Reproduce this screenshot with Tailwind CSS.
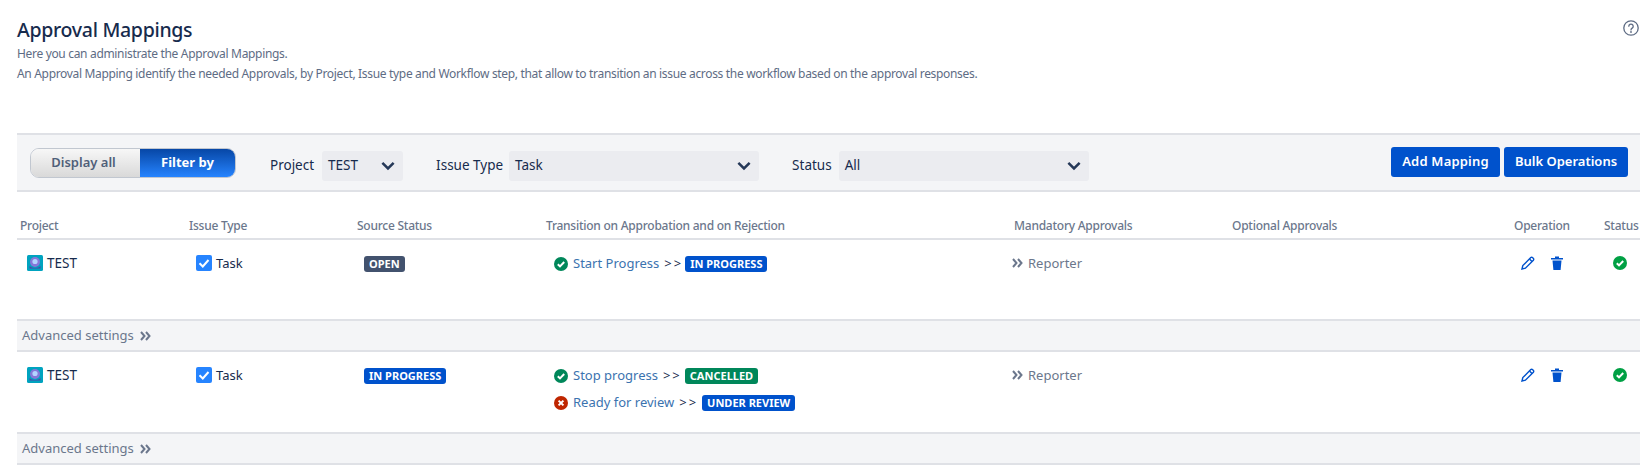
<!DOCTYPE html>
<html lang="en">
<head>
    <meta charset="UTF-8">
    <title>Approval Mappings</title>
    <script src="https://cdn.jsdelivr.net/npm/@tailwindcss/browser@4"></script>
</head>
<body class="bg-white font-['Noto_Sans',sans-serif] text-[#172b4d] text-[13px] overflow-hidden">
    <div class="pl-[17px] pr-[7px]">
        <!-- Page header -->
        <header class="relative h-[133px] pt-[17px]">
            <h1 class="text-[19.5px] leading-[26px] font-medium tracking-[-0.3px]">Approval Mappings</h1>
            <p class="mt-[1px] text-[12px] leading-[20px] tracking-[-0.325px] text-[#5e6c84]">Here you can administrate the Approval Mappings.</p>
            <p class="text-[12px] leading-[20px] tracking-[-0.325px] text-[#5e6c84]">An Approval Mapping identify the needed Approvals, by Project, Issue type and Workflow step, that allow to transition an issue across the workflow based on the approval responses.</p>
            <svg class="absolute right-[1px] top-[20px] w-4 h-4" viewBox="0 0 16 16" fill="none" stroke="#5e6c84" stroke-width="1.3"><circle cx="8" cy="8" r="7.2"/><path d="M5.8 6.2a2.2 2.2 0 1 1 3.4 1.9c-.8.5-1.2.9-1.2 1.8" stroke-linecap="round"/><circle cx="8" cy="12" r=".9" fill="#5e6c84" stroke="none"/></svg>
        </header>

        <!-- Toolbar -->
        <div class="h-[59px] flex items-center bg-[#f4f5f7] border-y-2 border-[#dfe1e6] pl-[13px] pr-[12px]">
            <div class="flex w-[206px] h-[30px] rounded-[9px] border border-[#c1c7d0] overflow-hidden text-[13px] font-semibold">
                <span class="w-[109px] pr-[4px] flex items-center justify-center bg-gradient-to-b from-[#f7f7f7] to-[#d9d9d9] text-[#505f79]">Display all</span>
                <span class="flex-1 flex items-center justify-center bg-gradient-to-b from-[#0747a6] to-[#2684ff] text-white font-bold">Filter by</span>
            </div>
            <label class="ml-[34px] mr-2 mt-[6px] text-[13.5px]">Project</label>
            <div class="w-[81px] h-[30px] mt-[6px] flex items-center justify-between bg-[#ebecf0] rounded-[3px] pl-[6px] pr-[5px] text-[13.5px]">TEST<svg class="w-5 h-5" viewBox="0 0 16 16" fill="none" stroke="#253858" stroke-width="2"><path d="M3.5 5.5 8 10l4.5-4.5"/></svg></div>
            <label class="ml-[33px] mr-[6px] mt-[6px] text-[13.5px]">Issue Type</label>
            <div class="w-[250px] h-[30px] mt-[6px] flex items-center justify-between bg-[#ebecf0] rounded-[3px] pl-[6px] pr-[5px] text-[13.5px]">Task<svg class="w-5 h-5" viewBox="0 0 16 16" fill="none" stroke="#253858" stroke-width="2"><path d="M3.5 5.5 8 10l4.5-4.5"/></svg></div>
            <label class="ml-[33px] mr-[7px] mt-[6px] text-[13.5px]">Status</label>
            <div class="w-[250px] h-[30px] mt-[6px] flex items-center justify-between bg-[#ebecf0] rounded-[3px] pl-[6px] pr-[5px] text-[13.5px]">All<svg class="w-5 h-5" viewBox="0 0 16 16" fill="none" stroke="#253858" stroke-width="2"><path d="M3.5 5.5 8 10l4.5-4.5"/></svg></div>
            <button class="ml-auto mb-[1px] w-[109px] h-[30px] bg-[#0052cc] text-white rounded-[3px] text-[13px] font-semibold tracking-[0.2px]">Add Mapping</button>
            <button class="ml-1 mb-[1px] w-[124px] h-[30px] bg-[#0052cc] text-white rounded-[3px] text-[13px] font-semibold">Bulk Operations</button>
        </div>

        <!-- Mappings table -->
        <table class="w-full table-fixed border-collapse mt-[26px]">
            <colgroup>
                <col class="w-[168px]"><col class="w-[168px]"><col class="w-[189px]"><col class="w-[468px]"><col class="w-[218px]"><col class="w-[282px]"><col class="w-[90px]"><col>
            </colgroup>
            <thead>
                <tr class="border-b-2 border-[#dfe1e6] text-[12px] tracking-[-0.25px] text-[#6b778c]">
                    <th class="h-[21px] pl-[3px] pb-[4px] leading-[16px] text-left font-medium">Project</th>
                    <th class="pl-1 pb-[4px] leading-[16px] text-left font-medium">Issue Type</th>
                    <th class="pl-1 pb-[4px] leading-[16px] text-left font-medium">Source Status</th>
                    <th class="pl-1 pb-[4px] leading-[16px] text-left font-medium">Transition on Approbation and on Rejection</th>
                    <th class="pl-1 pb-[4px] leading-[16px] text-left font-medium">Mandatory Approvals</th>
                    <th class="pl-1 pb-[4px] leading-[16px] text-left font-medium">Optional Approvals</th>
                    <th class="pl-1 pb-[4px] leading-[16px] text-left font-medium">Operation</th>
                    <th class="pl-1 pb-[4px] leading-[16px] text-left font-medium whitespace-nowrap">Status</th>
                </tr>
            </thead>
            <tbody>
                <tr class="h-[81px] align-top">
                    <td class="pl-[10px] pt-[14px]">
                        <div class="flex items-center gap-[4px] leading-[18px] text-[13.5px]"><svg class="w-4 h-4 shrink-0" viewBox="0 0 16 16"><rect width="16" height="16" rx="1.5" fill="#00a3bf"/><circle cx="8" cy="7" r="5" fill="#8777d9"/><path d="M2.5 11c2 2.5 9 2.5 11 0v2.5h-11z" fill="#5243aa"/><circle cx="8" cy="6.5" r="2.6" fill="#b3d4ff"/></svg>TEST</div>
                    </td>
                    <td class="pl-[11px] pt-[14px]">
                        <div class="flex items-center gap-[4px] leading-[18px]"><svg class="w-4 h-4 shrink-0" viewBox="0 0 16 16"><rect width="16" height="16" rx="2" fill="#2684ff"/><path d="M3.5 8.2 6.8 11.5 12.5 5" fill="none" stroke="#fff" stroke-width="2"/></svg>Task</div>
                    </td>
                    <td class="pl-[11px] pt-[16px]">
                        <span class="block w-fit px-[5px] rounded-[3px] bg-[#42526e] text-white text-[11px] leading-[16px] font-bold">OPEN</span>
                    </td>
                    <td class="pl-[12px] pt-[15px]">
                        <div class="flex items-center h-[18px] whitespace-nowrap">
                            <svg class="w-[14px] h-[14px] mr-[5px] shrink-0" viewBox="0 0 14 14"><circle cx="7" cy="7" r="7" fill="#00875a"/><path d="M3.8 7.2 6 9.4l4.2-4.4" fill="none" stroke="#fff" stroke-width="2"/></svg>
                            <a class="text-[#3b73af]">Start Progress</a><span class="ml-[5px] mr-[2px] tracking-[2px]">&gt;&gt;</span>
                            <span class="px-[5px] rounded-[3px] bg-[#0052cc] text-white text-[11px] leading-[16px] font-bold">IN PROGRESS</span>
                        </div>
                    </td>
                    <td class="pl-[2px] pt-[14px]">
                        <div class="flex items-center gap-[5px] leading-[18px] text-[#6b778c]"><svg class="w-[11px] h-[10px]" viewBox="0 0 11 10" fill="none" stroke="#6b778c" stroke-width="2"><path d="M1 1l3.5 4L1 9M6 1l3.5 4L6 9"/></svg>Reporter</div>
                    </td>
                    <td></td>
                    <td class="pl-[11px] pt-[16px]">
                        <div class="flex items-center gap-[16px]">
                            <svg class="w-[14px] h-[14px]" viewBox="0 0 14 14" fill="none" stroke="#0052cc" stroke-width="1.4"><path d="M1 13l.8-3.4L9.8 1.6a1.2 1.2 0 0 1 1.7 0l.9.9a1.2 1.2 0 0 1 0 1.7l-8 8z"/><path d="M8.5 3l2.5 2.5"/></svg>
                            <svg class="w-[12px] h-[14px]" viewBox="0 0 12 14" fill="#0052cc"><path d="M0 2h12v1.4H0zM4 .6h4V2H4zM1.5 4.4h9L9.6 14H2.4z"/></svg>
                        </div>
                    </td>
                    <td class="pl-[13px] pt-[16px]">
                        <svg class="w-[14px] h-[14px]" viewBox="0 0 14 14"><circle cx="7" cy="7" r="7" fill="#00a044"/><path d="M3.8 7.2 6 9.4l4.2-4.4" fill="none" stroke="#fff" stroke-width="2"/></svg>
                    </td>
                </tr>
                <tr class="h-[31px] border-y-2 border-[#dfe1e6] bg-[#f4f5f7]">
                    <td colspan="8" class="pl-[5px]">
                        <div class="flex items-center gap-[6px] text-[#6b778c]">Advanced settings<svg class="w-[11px] h-[10px]" viewBox="0 0 11 10" fill="none" stroke="#6b778c" stroke-width="2"><path d="M1 1l3.5 4L1 9M6 1l3.5 4L6 9"/></svg></div>
                    </td>
                </tr>
                <tr class="h-[82px] align-top">
                    <td class="pl-[10px] pt-[14px]">
                        <div class="flex items-center gap-[4px] leading-[18px] text-[13.5px]"><svg class="w-4 h-4 shrink-0" viewBox="0 0 16 16"><rect width="16" height="16" rx="1.5" fill="#00a3bf"/><circle cx="8" cy="7" r="5" fill="#8777d9"/><path d="M2.5 11c2 2.5 9 2.5 11 0v2.5h-11z" fill="#5243aa"/><circle cx="8" cy="6.5" r="2.6" fill="#b3d4ff"/></svg>TEST</div>
                    </td>
                    <td class="pl-[11px] pt-[14px]">
                        <div class="flex items-center gap-[4px] leading-[18px]"><svg class="w-4 h-4 shrink-0" viewBox="0 0 16 16"><rect width="16" height="16" rx="2" fill="#2684ff"/><path d="M3.5 8.2 6.8 11.5 12.5 5" fill="none" stroke="#fff" stroke-width="2"/></svg>Task</div>
                    </td>
                    <td class="pl-[11px] pt-[16px]">
                        <span class="block w-fit px-[5px] rounded-[3px] bg-[#0052cc] text-white text-[11px] leading-[16px] font-bold">IN PROGRESS</span>
                    </td>
                    <td class="pl-[12px] pt-[15px]">
                        <div class="flex items-center h-[18px] whitespace-nowrap">
                            <svg class="w-[14px] h-[14px] mr-[5px] shrink-0" viewBox="0 0 14 14"><circle cx="7" cy="7" r="7" fill="#00875a"/><path d="M3.8 7.2 6 9.4l4.2-4.4" fill="none" stroke="#fff" stroke-width="2"/></svg>
                            <a class="text-[#3b73af]">Stop progress</a><span class="ml-[5px] mr-[3px] tracking-[2px]">&gt;&gt;</span>
                            <span class="px-[5px] rounded-[3px] bg-[#00875a] text-white text-[11px] leading-[16px] font-bold">CANCELLED</span>
                        </div>
                        <div class="flex items-center h-[18px] mt-[9px] whitespace-nowrap">
                            <svg class="w-[14px] h-[14px] mr-[5px] shrink-0" viewBox="0 0 14 14"><circle cx="7" cy="7" r="7" fill="#bf2600"/><path d="M4.6 4.6l4.8 4.8M9.4 4.6l-4.8 4.8" fill="none" stroke="#fff" stroke-width="2"/></svg>
                            <a class="text-[#3b73af]">Ready for review</a><span class="ml-[5px] mr-[4px] tracking-[2px]">&gt;&gt;</span>
                            <span class="px-[5px] rounded-[3px] bg-[#0052cc] text-white text-[11px] leading-[16px] font-bold">UNDER REVIEW</span>
                        </div>
                    </td>
                    <td class="pl-[2px] pt-[14px]">
                        <div class="flex items-center gap-[5px] leading-[18px] text-[#6b778c]"><svg class="w-[11px] h-[10px]" viewBox="0 0 11 10" fill="none" stroke="#6b778c" stroke-width="2"><path d="M1 1l3.5 4L1 9M6 1l3.5 4L6 9"/></svg>Reporter</div>
                    </td>
                    <td></td>
                    <td class="pl-[11px] pt-[16px]">
                        <div class="flex items-center gap-[16px]">
                            <svg class="w-[14px] h-[14px]" viewBox="0 0 14 14" fill="none" stroke="#0052cc" stroke-width="1.4"><path d="M1 13l.8-3.4L9.8 1.6a1.2 1.2 0 0 1 1.7 0l.9.9a1.2 1.2 0 0 1 0 1.7l-8 8z"/><path d="M8.5 3l2.5 2.5"/></svg>
                            <svg class="w-[12px] h-[14px]" viewBox="0 0 12 14" fill="#0052cc"><path d="M0 2h12v1.4H0zM4 .6h4V2H4zM1.5 4.4h9L9.6 14H2.4z"/></svg>
                        </div>
                    </td>
                    <td class="pl-[13px] pt-[16px]">
                        <svg class="w-[14px] h-[14px]" viewBox="0 0 14 14"><circle cx="7" cy="7" r="7" fill="#00a044"/><path d="M3.8 7.2 6 9.4l4.2-4.4" fill="none" stroke="#fff" stroke-width="2"/></svg>
                    </td>
                </tr>
                <tr class="h-[31px] border-y-2 border-[#dfe1e6] bg-[#f4f5f7]">
                    <td colspan="8" class="pl-[5px]">
                        <div class="flex items-center gap-[6px] text-[#6b778c]">Advanced settings<svg class="w-[11px] h-[10px]" viewBox="0 0 11 10" fill="none" stroke="#6b778c" stroke-width="2"><path d="M1 1l3.5 4L1 9M6 1l3.5 4L6 9"/></svg></div>
                    </td>
                </tr>
            </tbody>
        </table>
    </div>
</body>
</html>
